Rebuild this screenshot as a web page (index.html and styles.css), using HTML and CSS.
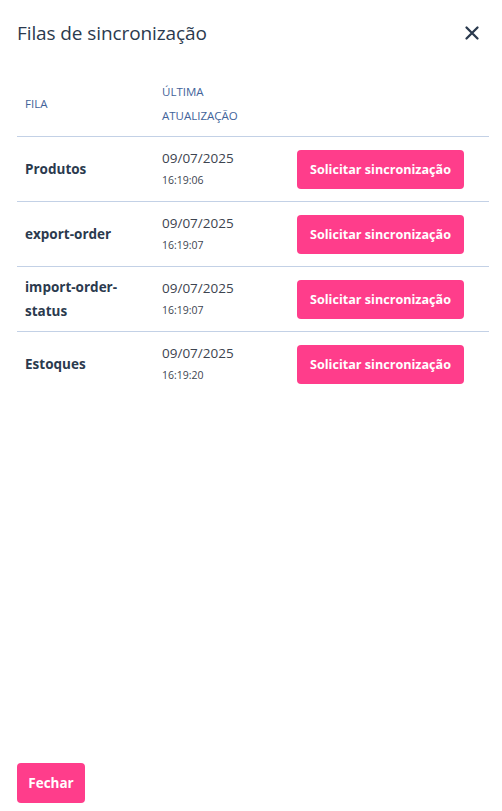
FILE: index.html
```html
<!DOCTYPE html>
<html lang="pt-BR">
<head>
  <meta charset="UTF-8">
  <meta name="viewport" content="width=device-width, initial-scale=1.0">
  <title>Filas de sincronização</title>
  <link rel="stylesheet" href="styles.css">
</head>
<body>

  <div class="modal">
    <div class="modal-header">
      <h2>Filas de sincronização</h2>
      <button class="close-btn" aria-label="Fechar">
        <svg width="16" height="16" viewBox="0 0 16 16">
          <path d="M2.5 2.5 L13.5 13.5 M13.5 2.5 L2.5 13.5" stroke="#2b3a4e" stroke-width="2.3" stroke-linecap="round" fill="none"/>
        </svg>
      </button>
    </div>

    <table class="queues">
      <thead>
        <tr>
          <th class="col-name">FILA</th>
          <th class="col-date">ÚLTIMA<br>ATUALIZAÇÃO</th>
          <th></th>
        </tr>
      </thead>
      <tbody>
        <tr>
          <td class="name">Produtos</td>
          <td><div class="date">09/07/2025</div><div class="time">16:19:06</div></td>
          <td><button class="sync-btn">Solicitar sincronização</button></td>
        </tr>
        <tr>
          <td class="name">export-order</td>
          <td><div class="date">09/07/2025</div><div class="time">16:19:07</div></td>
          <td><button class="sync-btn">Solicitar sincronização</button></td>
        </tr>
        <tr>
          <td class="name">import-order-status</td>
          <td><div class="date">09/07/2025</div><div class="time">16:19:07</div></td>
          <td><button class="sync-btn">Solicitar sincronização</button></td>
        </tr>
        <tr>
          <td class="name">Estoques</td>
          <td><div class="date">09/07/2025</div><div class="time">16:19:20</div></td>
          <td><button class="sync-btn">Solicitar sincronização</button></td>
        </tr>
      </tbody>
    </table>

    <div class="modal-footer">
      <button class="close-footer">Fechar</button>
    </div>
  </div>

</body>
</html>
```

FILE: styles.css
```css
* {
  box-sizing: border-box;
  margin: 0;
  padding: 0;
}

body {
  font-family: "Open Sans", "Noto Sans", sans-serif;
  background: #fff;
  color: #2b3a4e;
}

.modal {
  display: flex;
  flex-direction: column;
  height: 100vh;
  padding: 0 13px 8px 17px;
}

.modal-header {
  display: flex;
  align-items: center;
  justify-content: space-between;
  height: 66px;
  padding-right: 9px;
}

.modal-header h2 {
  font-size: 19px;
  font-weight: 400;
  color: #2b3a4e;
  letter-spacing: -0.1px;
}

.close-btn {
  background: none;
  border: none;
  cursor: pointer;
  display: flex;
  padding: 0;
}

.queues {
  width: 100%;
  border-collapse: collapse;
  margin-top: 6px;
}

.queues th {
  text-align: left;
  font-size: 11.5px;
  font-weight: 500;
  color: #42639a;
  line-height: 24px;
  padding: 8px;
  border-bottom: 1px solid #c3d1e6;
  vertical-align: middle;
}

.queues .col-name {
  width: 137px;
}

.queues .col-date {
  width: 135px;
}

.queues td {
  height: 65px;
  padding: 0 8px;
  vertical-align: middle;
  border-bottom: 1px solid #c3d1e6;
}

.queues tbody tr:last-child td {
  border-bottom: none;
}

.name {
  font-size: 13.5px;
  font-weight: 700;
  line-height: 24px;
  color: #2b3a4e;
}

.date {
  font-size: 13.5px;
  color: #3d4450;
  line-height: 22px;
}

.time {
  font-size: 10.5px;
  color: #3d4450;
  line-height: 22px;
}

.sync-btn,
.close-footer {
  background: #ff3d8b;
  color: white;
  border: none;
  border-radius: 4px;
  font-family: inherit;
  font-weight: 700;
  font-size: 13.5px;
  cursor: pointer;
}

.sync-btn {
  height: 39px;
  width: 167px;
  font-size: 12.6px;
  white-space: nowrap;
}

.modal-footer {
  margin-top: auto;
}

.close-footer {
  height: 40px;
  width: 68px;
}
```
